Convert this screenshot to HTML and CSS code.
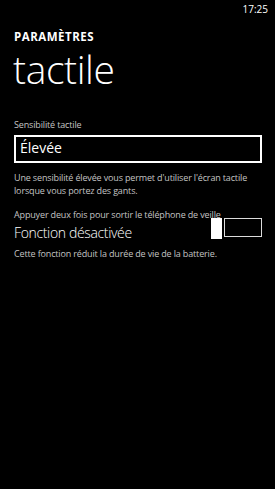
FILE: index.html
```html
<!DOCTYPE html>
<html lang="fr">
<head>
<meta charset="utf-8">
<link rel="stylesheet" href="styles.css">
</head>
<body>
<div class="screen">
  <div class="status"><span class="time">17:25</span></div>
  <div class="header">
    <div class="app-title">PARAMÈTRES</div>
    <div class="page-title">tactile</div>
  </div>
  <div class="content">
    <div class="label">Sensibilité tactile</div>
    <div class="picker">Élevée</div>
    <div class="desc">Une sensibilité élevée vous permet d'utiliser l'écran tactile lorsque vous portez des gants.</div>
    <div class="toggle-block">
      <div class="label toggle-label">Appuyer deux fois pour sortir le téléphone de veille</div>
      <div class="toggle-row">
        <div class="toggle-state">Fonction désactivée</div>
        <div class="switch">
          <div class="thumb"></div>
          <div class="track"></div>
        </div>
      </div>
      <div class="desc">Cette fonction réduit la durée de vie de la batterie.</div>
    </div>
  </div>
</div>
</body>
</html>
```
FILE: styles.css
```css
html, body {
  margin: 0;
  padding: 0;
  background: #000;
}
.screen {
  width: 275px;
  height: 489px;
  background: #000;
  color: #fff;
  font-family: "Open Sans", "Noto Sans", sans-serif;
  overflow: hidden;
}
.status {
  height: 18px;
  display: flex;
  justify-content: flex-end;
  align-items: center;
  padding-right: 7px;
}
.time {
  font-size: 10px;
  color: #fff;
}
.header {
  padding-left: 13px;
  margin-top: 12px;
}
.app-title {
  font-size: 11.5px;
  font-weight: 700;
  line-height: 14px;
  letter-spacing: 0.5px;
  padding-left: 1px;
}
.page-title {
  font-size: 39px;
  font-weight: 300;
  line-height: 44px;
  margin-top: 3px;
  letter-spacing: -0.4px;
}
.content {
  padding: 0 13px 0 14px;
  margin-top: 28px;
}
.label {
  font-size: 9px;
  color: #c4c4c4;
  line-height: 12px;
  letter-spacing: -0.15px;
}
.picker {
  margin-top: 4px;
  border: 2px solid #fff;
  height: 22px;
  line-height: 22px;
  padding: 0 0 2px 4px;
  font-size: 14px;
}
.desc {
  font-size: 9px;
  color: #c4c4c4;
  line-height: 13px;
  letter-spacing: -0.15px;
  margin-top: 8px;
}
.toggle-block {
  margin-top: 11.5px;
}
.toggle-row {
  display: flex;
  justify-content: space-between;
  align-items: flex-start;
  height: 24px;
}
.toggle-state {
  font-size: 14px;
  font-weight: 300;
  line-height: 24px;
  letter-spacing: -0.35px;
}
.switch {
  display: flex;
  align-items: flex-start;
  gap: 2px;
  margin-top: -2.5px;
}
.thumb {
  width: 11px;
  height: 21px;
  background: #fff;
}
.track {
  width: 36px;
  height: 17px;
  border: 1px solid #dcdcdc;
}
.toggle-block .desc {
  margin-top: 2.5px;
}
```
